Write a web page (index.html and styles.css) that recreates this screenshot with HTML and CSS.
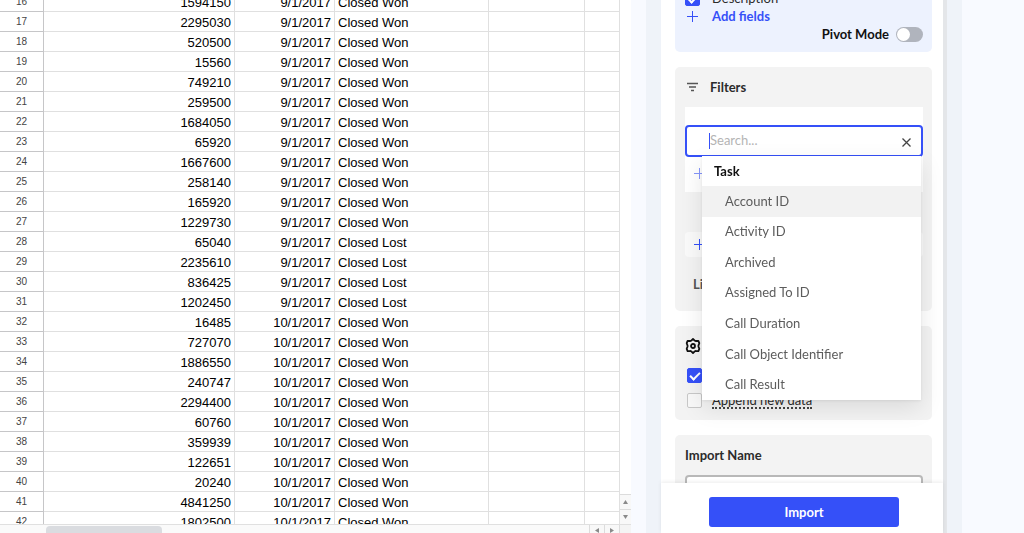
FILE: index.html
```html
<!DOCTYPE html>
<html lang="en">
<head>
    <meta charset="UTF-8">
    <meta name="viewport" content="width=device-width, initial-scale=1.0">
    <title>Import Data</title>
    <link rel="stylesheet" href="styles.css">
</head>
<body>

    <main class="sheet">
        <div class="sheet-body">
            <div class="grid-wrap">
                <table class="grid">
                    <colgroup>
                        <col class="col-num">
                        <col class="col-amount">
                        <col class="col-date">
                        <col class="col-stage">
                        <col class="col-empty">
                        <col>
                    </colgroup>
                    <tbody id="grid-rows"></tbody>
                </table>
            </div>
            <div class="scroll-y">
                <button class="arrow" aria-label="Scroll up"><svg width="5" height="4"><path d="M2.5 0L5 4H0z"/></svg></button>
                <button class="arrow" aria-label="Scroll down"><svg width="5" height="4"><path d="M0 0h5L2.5 4z"/></svg></button>
            </div>
        </div>
        <div class="scroll-x">
            <div class="thumb"></div>
            <button class="arrow" aria-label="Scroll left"><svg width="4" height="5"><path d="M4 0v5L0 2.5z"/></svg></button>
            <button class="arrow" aria-label="Scroll right"><svg width="4" height="5"><path d="M0 0l4 2.5L0 5z"/></svg></button>
            <div class="corner"></div>
        </div>
    </main>

    <div class="panel-area">
        <aside class="sidebar">
            <div class="sidebar-scroll">
                <section class="card fields-card">
                    <div class="row">
                        <input type="checkbox" class="check" id="field-description" checked>
                        <label for="field-description">Description</label>
                    </div>
                    <a href="#" class="row add-link">
                        <svg class="plus" width="15" height="11" viewBox="0 0 15 11"><path d="M7.5 0v11M2 5.5h11"/></svg>
                        Add fields
                    </a>
                    <div class="row pivot">
                        <label for="pivot-mode">Pivot Mode</label>
                        <input type="checkbox" class="toggle" id="pivot-mode">
                    </div>
                </section>

                <section class="card">
                    <h2 class="card-title">
                        <svg class="filter-icon" width="15" height="10" viewBox="0 0 15 10"><path d="M2 1.5h11M4 5h7M6 8.5h3"/></svg>
                        Filters
                    </h2>
                    <div class="filter-box">
                        <div class="search">
                            <input type="text" id="filter-search" aria-label="Search fields" placeholder="Search...">
                            <button class="clear-btn" aria-label="Clear"><svg width="9" height="9" viewBox="0 0 9 9"><path d="M.5.5l8 8M8.5.5l-8 8"/></svg></button>
                            <div class="menu">
                                <h3>Task</h3>
                                <ul>
                                    <li class="active">Account ID</li>
                                    <li>Activity ID</li>
                                    <li>Archived</li>
                                    <li>Assigned To ID</li>
                                    <li>Call Duration</li>
                                    <li>Call Object Identifier</li>
                                    <li>Call Result</li>
                                </ul>
                            </div>
                        </div>
                        <button class="add-btn faded" aria-label="Add filter"><svg class="plus" width="11" height="11" viewBox="0 0 11 11"><path d="M5.5 0v11M0 5.5h11"/></svg></button>
                    </div>
                    <button class="add-btn sort-btn" aria-label="Add sort"><svg class="plus" width="11" height="11" viewBox="0 0 11 11"><path d="M5.5 0v11M0 5.5h11"/></svg></button>
                    <div class="limit">Limit</div>
                </section>

                <section class="card settings-card">
                    <div class="card-title">
                        <svg width="16" height="18" viewBox="0 0 16 18" class="gear"><path d="M8 2l2 1.8q.5.3 1 .2l2.4-.1.9 2.3-.8 2.2q-.2.6 0 1.2l.8 2.2-.9 2.3-2.4-.1q-.5-.1-1 .2L8 16l-2-1.800q-.5-.3-1-.2l-2.400.1-.9-2.300.8-2.200q.2-.6 0-1.200l-.8-2.200.9-2.300 2.400.1q.5.1 1-.2z"/><circle cx="8" cy="9" r="2"/></svg>
                    </div>
                    <div class="row option">
                        <input type="checkbox" class="check" aria-label="Keep data fresh" checked>
                    </div>
                    <div class="row option">
                        <input type="checkbox" class="check" id="append-data">
                        <label for="append-data" class="hint">Append new data</label>
                    </div>
                </section>

                <section class="card">
                    <label for="import-name" class="card-title">Import Name</label>
                    <input type="text" id="import-name" class="text-input">
                </section>
            </div>
            <div class="footer">
                <button class="import-btn">Import</button>
            </div>
        </aside>
    </div>

    <script>
        const firstRow = 16;
        const rows = [
            [1594150, '9/1/2017', 'Closed Won'],
            [2295030, '9/1/2017', 'Closed Won'],
            [520500, '9/1/2017', 'Closed Won'],
            [15560, '9/1/2017', 'Closed Won'],
            [749210, '9/1/2017', 'Closed Won'],
            [259500, '9/1/2017', 'Closed Won'],
            [1684050, '9/1/2017', 'Closed Won'],
            [65920, '9/1/2017', 'Closed Won'],
            [1667600, '9/1/2017', 'Closed Won'],
            [258140, '9/1/2017', 'Closed Won'],
            [165920, '9/1/2017', 'Closed Won'],
            [1229730, '9/1/2017', 'Closed Won'],
            [65040, '9/1/2017', 'Closed Lost'],
            [2235610, '9/1/2017', 'Closed Lost'],
            [836425, '9/1/2017', 'Closed Lost'],
            [1202450, '9/1/2017', 'Closed Lost'],
            [16485, '10/1/2017', 'Closed Won'],
            [727070, '10/1/2017', 'Closed Won'],
            [1886550, '10/1/2017', 'Closed Won'],
            [240747, '10/1/2017', 'Closed Won'],
            [2294400, '10/1/2017', 'Closed Won'],
            [60760, '10/1/2017', 'Closed Won'],
            [359939, '10/1/2017', 'Closed Won'],
            [122651, '10/1/2017', 'Closed Won'],
            [20240, '10/1/2017', 'Closed Won'],
            [4841250, '10/1/2017', 'Closed Won'],
            [1802500, '10/1/2017', 'Closed Won']
        ];

        document.getElementById('grid-rows').innerHTML = rows.map(([amount, date, stage], i) => `
            <tr>
                <th scope="row">${firstRow + i}</th>
                <td class="num">${amount}</td>
                <td class="num">${date}</td>
                <td>${stage}</td>
                <td></td>
                <td></td>
            </tr>
        `).join('');

        document.getElementById('filter-search').focus();
    </script>

</body>
</html>
```
FILE: styles.css
```css
* {
    box-sizing: border-box;
}
body {
    margin: 0;
    height: 100vh;
    display: flex;
    overflow: hidden;
    background: #f8faff;
    font-family: Lato, sans-serif;
    font-size: 13px;
    line-height: 18px;
    color: #2b2b2b;
}
button {
    padding: 0;
    border: none;
    font: inherit;
    cursor: pointer;
}

/* Spreadsheet */
.sheet {
    flex: 1;
    min-width: 0;
    display: flex;
    flex-direction: column;
    background: white;
}
.sheet-body {
    flex: 1;
    min-height: 0;
    display: flex;
}
.grid-wrap {
    flex: 1;
    min-width: 0;
    overflow: hidden;
}
.grid {
    width: 100%;
    margin-top: -8px;
    table-layout: fixed;
    border-collapse: separate;
    border-spacing: 0;
    font-family: "Liberation Sans", Arial, sans-serif;
    color: #000;
}
.col-num {
    width: 44px;
}
.col-amount {
    width: 191px;
}
.col-date {
    width: 100px;
}
.col-stage {
    width: 154px;
}
.col-empty {
    width: 96px;
}
.grid th, .grid td {
    height: 20px;
    padding: 2px 3px 0;
    border-right: 1px solid #e0e0e0;
    border-bottom: 1px solid #e0e0e0;
    line-height: 17px;
    white-space: nowrap;
}
.grid th {
    padding-top: 0;
    border-color: #c6c6c8;
    font-size: 10px;
    font-weight: normal;
    color: #444;
}
.grid .num {
    text-align: right;
}
.arrow {
    display: flex;
    align-items: center;
    justify-content: center;
    width: 15px;
    height: 15px;
    background: #f8f8f8;
    border: 0 solid #dcdcdc;
}
.arrow svg {
    fill: #8a8a8a;
}
.scroll-y {
    width: 11px;
    display: flex;
    flex-direction: column;
    justify-content: flex-end;
}
.scroll-y .arrow {
    width: 11px;
    border-top-width: 1px;
}
.scroll-x {
    height: 9px;
    display: flex;
    padding-left: 46px;
    overflow: hidden;
    border-top: 1px solid #e0e0e0;
    background: #fafafa;
}
.thumb {
    width: 116px;
    height: 12px;
    margin: 1px auto 0 0;
    border-radius: 4px;
    background: #dadce0;
}
.scroll-x .arrow {
    height: 11px;
    border-left-width: 1px;
}
.corner {
    width: 12px;
    border-left: 1px solid #dcdcdc;
    background: #f4f4f4;
}

/* Import panel */
.panel-area {
    display: flex;
    margin: 0 62px 0 15px;
    padding: 0 19px 0 15px;
    background: #eff3f9;
}
.sidebar {
    width: 282px;
    display: flex;
    flex-direction: column;
    background: white;
    box-shadow: 4px 0 0 #e4e6e9;
}
.sidebar-scroll {
    flex: 1;
    min-height: 0;
    overflow: hidden;
    padding: 0 11px 0 14px;
}
.card {
    margin-bottom: 15px;
    padding: 11px 9px 18px 10px;
    border-radius: 5px;
    background: #f3f3f3;
}
.card-title {
    display: flex;
    align-items: center;
    gap: 10px;
    height: 18px;
    margin: 0 0 11px;
    font-size: 13px;
    font-weight: bold;
}
.row {
    display: flex;
    align-items: center;
    gap: 12px;
}
.fields-card {
    margin-top: -11px;
    padding: 0 9px 9px 10px;
    background: #edf2fe;
}
.add-link {
    color: #3550f8;
    font-weight: bold;
    text-decoration: none;
}
.plus {
    fill: none;
    stroke: #3550f8;
    stroke-width: 1;
}
.pivot {
    justify-content: flex-end;
    gap: 7px;
    font-weight: bold;
    color: #111;
}
.check {
    appearance: none;
    width: 15px;
    height: 15px;
    margin: 0;
    border: 1px solid #c8c8c8;
    border-radius: 2px;
    background: #f8f8f8;
}
.check:checked {
    border-color: #3550f8;
    background: #3550f8;
}
.check:checked::after {
    content: "";
    display: block;
    width: 8px;
    height: 4px;
    margin: 3px 2px;
    border: solid white;
    border-width: 0 0 2px 2px;
    transform: rotate(-45deg);
}
.toggle {
    appearance: none;
    width: 27px;
    height: 15px;
    margin: 0;
    padding: 1px;
    border-radius: 8px;
    background: #b0b4bd;
}
.toggle::before {
    content: "";
    display: block;
    width: 13px;
    height: 13px;
    border-radius: 50%;
    background: white;
}
.filter-icon {
    fill: none;
    stroke: #555;
    stroke-width: 1.4;
}
.filter-box {
    padding: 18px 0 3px;
    background: white;
}
.search {
    position: relative;
    display: flex;
    align-items: center;
    height: 32px;
    padding: 0 10px 0 22px;
    border: 2px solid #3550f8;
    border-radius: 4px;
    background: white;
}
.search input {
    flex: 1;
    min-width: 0;
    height: 28px;
    padding: 0 0 3px 1px;
    border: none;
    outline: none;
    background: linear-gradient(#3550f8, #3550f8) 0 6px / 1px 16px no-repeat;
    font: inherit;
    caret-color: transparent;
}
.search input::placeholder {
    color: #b4b4b4;
}
.clear-btn {
    display: flex;
    padding-top: 2px;
    background: none;
}
.clear-btn svg {
    stroke: #444;
    stroke-width: 1.3;
}
/* Field list that drops over the rest of the panel */
.menu {
    position: absolute;
    top: 29px;
    left: 15px;
    right: 0;
    height: 244px;
    display: flex;
    flex-direction: column;
    z-index: 2;
    background: white;
    box-shadow: 0 8px 22px rgba(0, 0, 0, 0.1), 0 1px 3px rgba(0, 0, 0, 0.08);
}
.menu h3 {
    margin: 0;
    padding-left: 12px;
    font-size: 13px;
    line-height: 30px;
    color: #111;
}
.menu ul {
    flex: 1;
    display: grid;
    grid-auto-rows: 1fr;
    margin: 0;
    padding: 0;
    list-style: none;
}
.menu li {
    display: flex;
    align-items: center;
    padding: 0 0 1px 23px;
    color: #5c5c5c;
}
.menu li.active {
    background: #f2f2f2;
}
.add-btn {
    display: flex;
    align-items: center;
    width: 100%;
    height: 32px;
    padding-left: 9px;
    background: none;
}
.faded {
    opacity: 0.6;
}
.sort-btn {
    height: 25px;
    margin: 40px 0 18px;
    border-radius: 4px;
    background: #fafafa;
}
.limit {
    padding-left: 8px;
    font-weight: bold;
    color: #555;
}
.settings-card {
    padding-bottom: 7px;
}
.settings-card .card-title {
    margin-bottom: 8px;
}
.gear {
    fill: none;
    stroke: #111;
    stroke-width: 1.8;
    stroke-linejoin: round;
}
.option {
    height: 25px;
    gap: 10px;
    padding-left: 2px;
}
.hint {
    line-height: 14px;
    border-bottom: 2px dotted #444;
}
.text-input {
    display: block;
    width: 100%;
    height: 32px;
    border: 2px solid #b8b8b8;
    border-radius: 4px;
    background: white;
}
.footer {
    position: relative;
    padding: 14px 44px 6px 48px;
    background: white;
    box-shadow: 0 -1px 4px rgba(0, 0, 0, 0.08);
}
.import-btn {
    display: block;
    width: 100%;
    height: 30px;
    padding-bottom: 1px;
    border-radius: 3px;
    background: #3550f8;
    color: white;
    font-weight: bold;
}
```
